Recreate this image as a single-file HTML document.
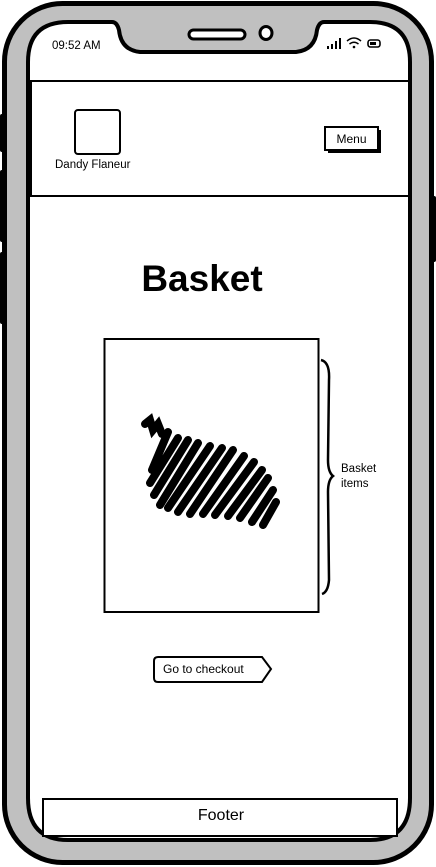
<!DOCTYPE html>
<html><head><meta charset="utf-8"><style>
html,body{margin:0;padding:0;background:#fff;width:436px;height:867px;overflow:hidden}
svg{display:block}
text{font-family:"Liberation Sans",sans-serif;fill:#000}
</style></head><body>
<svg width="436" height="867" viewBox="0 0 436 867" xmlns="http://www.w3.org/2000/svg">
<rect x="0" y="114" width="6" height="38" rx="2" fill="#000"/>
<rect x="0" y="170" width="6" height="72" rx="2" fill="#000"/>
<rect x="0" y="252" width="6" height="72" rx="2" fill="#000"/>
<rect x="430" y="196" width="6" height="66" rx="2" fill="#000"/>
<rect x="4.5" y="3.5" width="427" height="859" rx="58" fill="#c0c0c0" stroke="#000" stroke-width="5"/>
<path d="M28 62 Q28 22 68 22 L112 22 Q117 22 119 30 Q121 50 140 52 L296 52 Q315 50 317 30 Q319 22 324 22 L370 22 Q410 22 410 62 L410 798 Q410 840 370 840 L68 840 Q28 840 28 798 Z" fill="#fff" stroke="#000" stroke-width="4"/>
<rect x="189" y="30" width="56" height="9" rx="4.5" fill="#fff" stroke="#000" stroke-width="3"/>
<ellipse cx="266" cy="33" rx="6" ry="6.5" fill="#fff" stroke="#000" stroke-width="3"/>
<text x="52" y="49" font-size="11.5">09:52 AM</text>
<g fill="#000">
<rect x="327" y="46" width="2" height="3"/><rect x="331" y="44" width="2" height="5"/><rect x="335" y="41" width="2" height="8"/><rect x="339" y="38" width="2" height="11"/>
</g>
<path d="M347 41 Q354 35 361 41 M349.5 44 Q354 40.5 358.5 44" fill="none" stroke="#000" stroke-width="1.5"/>
<circle cx="354" cy="47" r="1.3" fill="#000"/>
<rect x="368" y="40" width="12" height="7" rx="2.5" fill="none" stroke="#000" stroke-width="1.6"/>
<rect x="370" y="42" width="6" height="3" fill="#000"/>
<rect x="31" y="81" width="378" height="115" fill="#fff" stroke="#000" stroke-width="2"/>
<rect x="75" y="110" width="45" height="44" rx="3" fill="#fff" stroke="#000" stroke-width="2"/>
<text x="55" y="168" font-size="11.5">Dandy Flaneur</text>
<rect x="328" y="130" width="53" height="23" fill="#000"/>
<rect x="325" y="127" width="53" height="23" fill="#fff" stroke="#000" stroke-width="2"/>
<text x="351.5" y="143" font-size="12" text-anchor="middle">Menu</text>
<text x="202" y="291" font-size="37" font-weight="bold" text-anchor="middle">Basket</text>
<rect x="104.5" y="339" width="214" height="273" fill="#fff" stroke="#000" stroke-width="2"/>
<g fill="none" stroke="#000" stroke-width="8" stroke-linecap="round">
<path d="M145 424 L150 420 L153 430 L158 424 L162 434"/>
<path d="M152 470 L168 432 M150 483 L178 438 M154 495 L188 440 M160 505 L198 443 M168 508 L210 446 M178 512 L222 448 M190 514 L233 450 M203 514 L244 456 M215 515 L254 462 M228 516 L262 470 M240 518 L268 478 M252 522 L273 490 M263 525 L276 502"/>
</g>
<path d="M321 360 Q330 362 329 380 L328 460 Q328 472 333 476 Q328 480 328 492 L329 580 Q328 592 322 594" fill="none" stroke="#000" stroke-width="2.5"/>
<text x="341" y="472" font-size="11.5">Basket</text>
<text x="341" y="487" font-size="11.5">items</text>
<path d="M158 657 L262 657 L271 669 L262 682 L158 682 Q154 682 154 678 L154 661 Q154 657 158 657 Z" fill="#fff" stroke="#000" stroke-width="2"/>
<text x="163" y="673" font-size="12">Go to checkout</text>
<rect x="43" y="799" width="354" height="37" fill="#fff" stroke="#000" stroke-width="2"/>
<text x="221" y="820" font-size="16" text-anchor="middle">Footer</text>
</svg>
</body></html>
